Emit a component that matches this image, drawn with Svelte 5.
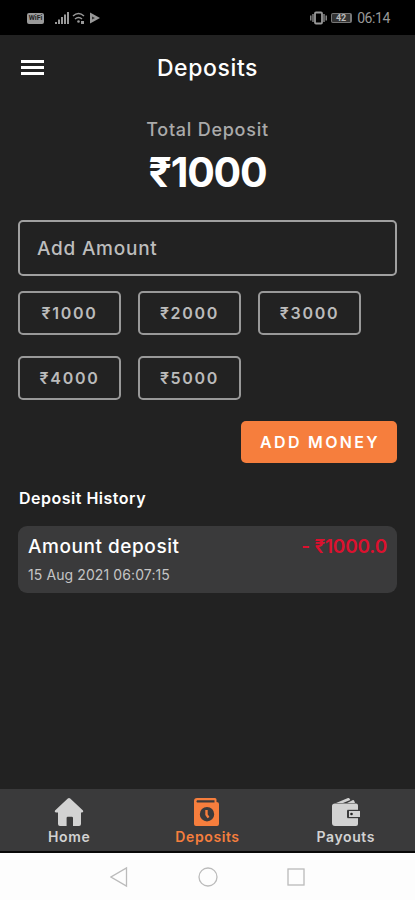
<script>
  let amount = "";
  let activeTab = "Deposits";

  const presets = [1000, 2000, 3000, 4000, 5000];
  const history = [
    { title: "Amount deposit", date: "15 Aug 2021 06:07:15", value: "- ₹1000.0" }
  ];
  const tabs = ["Home", "Deposits", "Payouts"];

  function pick(value) {
    amount = String(value);
  }
</script>

<div class="screen">
  <div class="status">
    <div class="status-left">
      <span class="wifi-badge">WiFi</span>
      <svg width="46" height="14" viewBox="0 0 46 14" fill="#999">
        <path d="M0 11h2v2H0zM3 8.500h2V13H3zM6 6h2v7H6zM9 3.500h2V13H9zM12 1h2v12h-2z" />
        <path d="M18 5q5.500-5 11 0M20 8q3.500-3 7 0" fill="none" stroke="#999" stroke-width="1.500" />
        <circle cx="23.500" cy="10.500" r="1.300" />
        <path d="M26 10h3v3h-3z" />
        <path d="M35 1.500l10 5.500-10 5.500z" />
        <path d="M37 5.500l3 1.500-3 1.500z" fill="#333" />
      </svg>
    </div>
    <div class="status-right">
      <svg width="17" height="14" viewBox="0 0 17 14" fill="none" stroke="#999">
        <rect x="5" y="1.500" width="7" height="11" rx="1" stroke-width="1.800" />
        <path d="M3 3v8M14 3v8M.8 4.500v5M16.200 4.500v5" stroke-width="1.300" />
      </svg>
      <span class="battery">42</span>
      <span class="clock">06:14</span>
    </div>
  </div>

  <header>
    <button class="menu" aria-label="Menu">
      <i></i><i></i><i></i>
    </button>
    <h1>Deposits</h1>
  </header>

  <main>
    <section class="total">
      <p>Total Deposit</p>
      <strong>₹1000</strong>
    </section>

    <input placeholder="Add Amount" bind:value={amount} />

    <div class="presets">
      {#each presets as preset}
        <button class="preset" on:click={() => pick(preset)}>₹{preset}</button>
      {/each}
    </div>

    <button class="add">ADD MONEY</button>

    <h2>Deposit History</h2>
    {#each history as item}
      <div class="entry">
        <div>
          <div class="entry-title">{item.title}</div>
          <div class="entry-date">{item.date}</div>
        </div>
        <div class="entry-value">{item.value}</div>
      </div>
    {/each}
  </main>

  <nav>
    {#each tabs as tab}
      <button class="tab" class:active={activeTab === tab} on:click={() => (activeTab = tab)}>
        <svg width="30" height="30" viewBox="0 0 30 30" fill="currentColor">
          {#if tab === "Home"}
            <path d="M13.800 1.600q1.200-1 2.400 0L29 13.500q.9 1.500-.8 1.900H27V27q0 2-2 2h-6v-8q0-1.200-1.200-1.200h-4Q12.600 19.800 12.600 21v8H6q-2 0-2-2V15.400H1.800Q.1 15 1 13.500z" />
          {:else if tab === "Deposits"}
            <path fill-rule="evenodd" d="M5 1h18q1.500 0 1.500 1.500V5q2.500 0 2.500 2v20q0 2-2 2H4q-2 0-2-2V4q0-3 3-3zM5 3.300q-1.200 1.200 0 2.200h17.500V3.300zM15 10a7.200 7.200 0 100 14.400A7.200 7.200 0 1015 10z" />
            <path d="M14.500 13v4.600l2 3" fill="none" stroke="currentColor" stroke-width="2.400" />
          {:else}
            <path d="M5 6l12-5q1-.4 1.500.5l.8 1.500L12 6zM16 6l6-3q1 0 1.300 1l.7 2z" />
            <path d="M4 6.500h21q2 0 2 2V13H17v8h10v6q0 2-2 2H4q-3 0-3-3V9q0-2.500 3-2.500z" />
            <path d="M18 14h11v6H18z" />
            <circle cx="20.500" cy="17" r="1.300" fill="#242424" />
            <path d="M28 13.300H16.500v7.400H28" fill="none" stroke="#3a3a3b" />
          {/if}
        </svg>
        <span>{tab}</span>
      </button>
    {/each}
  </nav>

  <div class="system">
    <svg width="18" height="22" viewBox="0 0 18 22"><path d="M16.500 2v18L1 11z" /></svg>
    <svg width="20" height="22" viewBox="0 0 20 22"><circle cx="10" cy="11" r="9" /></svg>
    <svg width="18" height="22" viewBox="0 0 18 22"><rect x="1" y="3" width="16" height="16" /></svg>
  </div>
</div>

<style>
  :global(body) {
    background: #222;
  }
  .screen {
    display: flex;
    flex-direction: column;
    height: 900px;
    background: #222;
    color: #fff;
    font-family: Inter, "Open Sans", sans-serif;
  }
  button {
    font-family: inherit;
    padding: 0;
    border: 0;
    background: none;
  }
  h1, h2, p {
    margin: 0;
  }
  .status {
    display: flex;
    justify-content: space-between;
    align-items: center;
    height: 35px;
    box-sizing: border-box;
    padding: 1px 25px 0 27px;
    background: #000;
    color: #999;
  }
  .status-left,
  .status-right {
    display: flex;
    align-items: center;
  }
  .status-left svg {
    margin-left: 11px;
  }
  .wifi-badge {
    width: 17px;
    height: 11px;
    border-radius: 2px;
    background: #999;
    color: #222;
    font: bold 7px/11px Roboto, sans-serif;
    text-align: center;
  }
  .battery {
    width: 21px;
    height: 10px;
    margin: 0 5px 0 4px;
    border: 1px solid #777;
    border-right-width: 2px;
    border-radius: 2px;
    box-sizing: border-box;
    background: #333;
    color: #bbb;
    font: bold 9px/9px Roboto, sans-serif;
    text-align: center;
  }
  .clock {
    font: 14px/18px Roboto, sans-serif;
    letter-spacing: -0.4px;
  }
  header {
    display: grid;
    grid-template-columns: 52px 1fr 52px;
    align-items: center;
    height: 65px;
  }
  .menu {
    display: flex;
    flex-direction: column;
    gap: 3px;
    width: 23px;
    margin-left: 21px;
  }
  .menu i {
    height: 3px;
    background: #fff;
  }
  h1 {
    font-size: 23px;
    font-weight: 500;
    line-height: 30px;
    text-align: center;
    letter-spacing: 0.6px;
  }
  main {
    flex: 1;
    display: flex;
    flex-direction: column;
    padding: 18px 18px 0;
  }
  .total {
    text-align: center;
    height: 102px;
  }
  .total p {
    padding-top: 1px;
    color: #aaa;
    font-size: 18px;
    font-weight: 500;
    line-height: 22px;
    letter-spacing: 0.75px;
  }
  .total strong {
    display: block;
    margin-top: 7px;
    font-size: 41px;
    line-height: 48px;
    letter-spacing: -1.2px;
  }
  input {
    height: 56px;
    box-sizing: border-box;
    padding: 0 17px;
    border: 2px solid #a0a0a0;
    border-radius: 5px;
    outline: none;
    background: #222;
    color: #c5c5c5;
    font: 500 19px Inter, sans-serif;
    letter-spacing: 0.75px;
  }
  input::placeholder {
    color: #bdbdbd;
    opacity: 1;
  }
  .presets {
    display: grid;
    grid-template-columns: repeat(3, 103px);
    gap: 21px 17px;
    margin-top: 15px;
  }
  .preset {
    height: 44px;
    border: 2px solid #999;
    border-radius: 5px;
    color: #bbb;
    font-size: 16px;
    font-weight: 600;
    letter-spacing: 1.7px;
  }
  .add {
    align-self: flex-end;
    width: 156px;
    height: 42px;
    margin-top: 21px;
    border-radius: 5px;
    background: #f67e3d;
    color: #fff;
    font-size: 16px;
    font-weight: 600;
    letter-spacing: 2.3px;
    text-indent: 2px;
  }
  h2 {
    margin: 25px 1px 18px;
    font-size: 16px;
    font-weight: 600;
    line-height: 20px;
    letter-spacing: 0.5px;
  }
  .entry {
    display: flex;
    justify-content: space-between;
    height: 67px;
    box-sizing: border-box;
    padding: 8px 10px;
    border-radius: 9px;
    background: #3a3a3b;
  }
  .entry-title {
    font-size: 19px;
    font-weight: 500;
    line-height: 25px;
    letter-spacing: 0.55px;
  }
  .entry-date {
    margin-top: 6px;
    color: #c5c5c5;
    font-size: 14px;
    line-height: 20px;
    letter-spacing: 0.1px;
  }
  .entry-value {
    color: #dd102e;
    font-size: 19px;
    font-weight: 600;
    line-height: 25px;
    letter-spacing: -0.2px;
  }
  nav {
    display: grid;
    grid-template-columns: repeat(3, 1fr);
    height: 64px;
    box-sizing: border-box;
    border-bottom: 2px solid #080808;
    background: #3a3a3b;
  }
  .tab {
    display: flex;
    flex-direction: column;
    align-items: center;
    justify-content: flex-start;
    gap: 1px;
    padding-top: 8px;
    color: #d2d2d2;
    font-size: 14px;
    font-weight: 600;
    line-height: 18px;
    letter-spacing: 0.6px;
  }
  .tab.active {
    color: #f67e3d;
  }
  .system {
    display: flex;
    justify-content: space-between;
    align-items: center;
    height: 47px;
    box-sizing: border-box;
    padding: 1px 110px 0;
    background: #fdfdfd;
  }
  .system svg {
    fill: none;
    stroke: #bbb;
    stroke-width: 1.3;
  }
</style>
